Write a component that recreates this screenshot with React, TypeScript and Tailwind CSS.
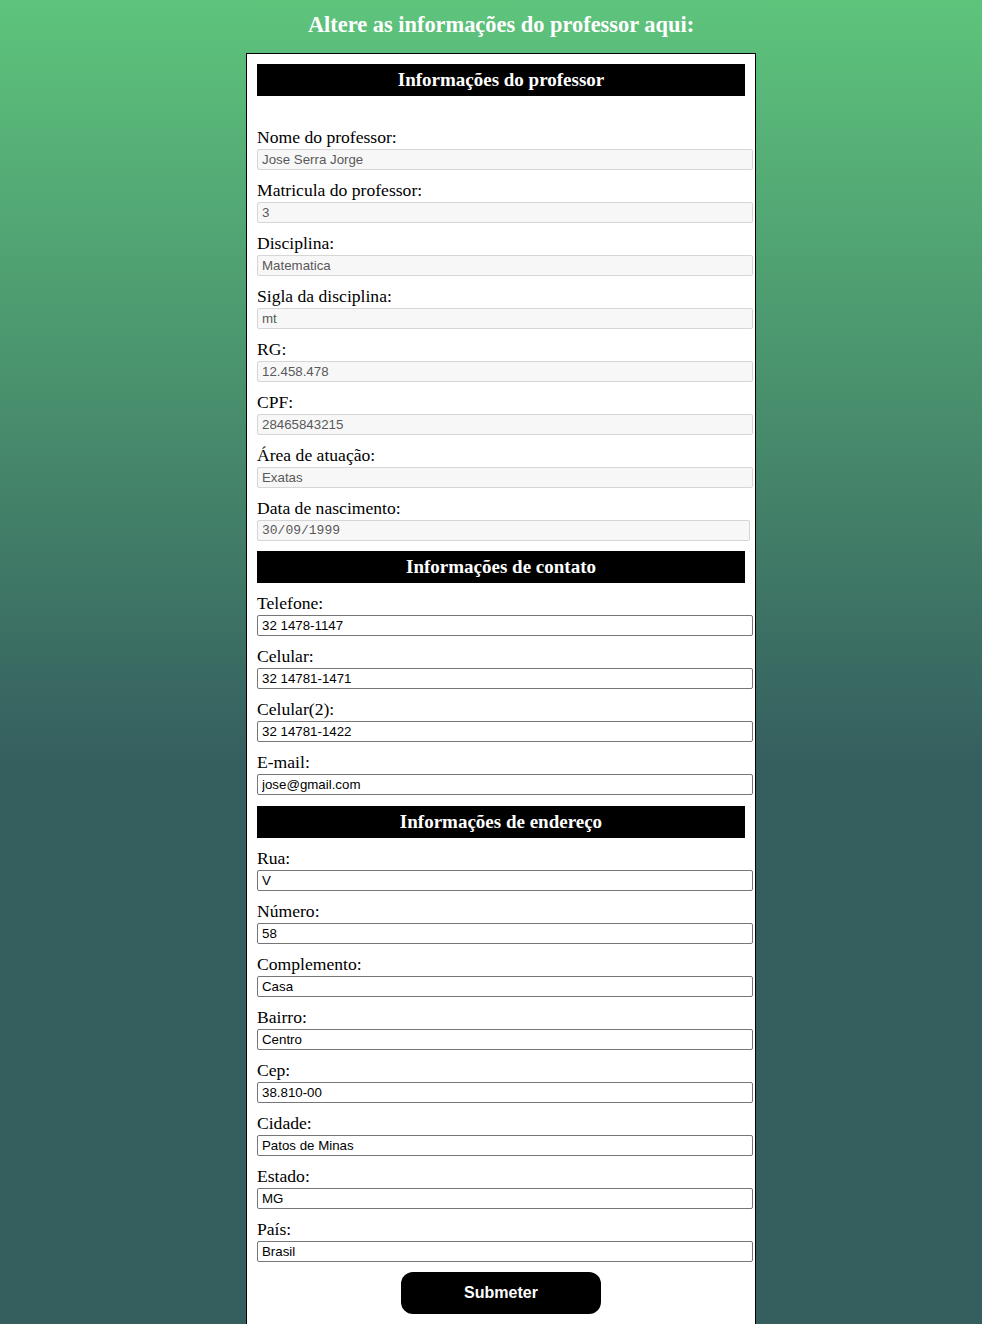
const PROFESSOR = [
  { label: "Nome do professor:", value: "Jose Serra Jorge" },
  { label: "Matricula do professor:", value: "3" },
  { label: "Disciplina:", value: "Matematica" },
  { label: "Sigla da disciplina:", value: "mt" },
  { label: "RG:", value: "12.458.478" },
  { label: "CPF:", value: "28465843215" },
  { label: "Área de atuação:", value: "Exatas" },
];

const CONTATO = [
  { label: "Telefone:", value: "32 1478-1147" },
  { label: "Celular:", value: "32 14781-1471" },
  { label: "Celular(2):", value: "32 14781-1422" },
  { label: "E-mail:", value: "jose@gmail.com" },
];

const ENDERECO = [
  { label: "Rua:", value: "V" },
  { label: "Número:", value: "58" },
  { label: "Complemento:", value: "Casa" },
  { label: "Bairro:", value: "Centro" },
  { label: "Cep:", value: "38.810-00" },
  { label: "Cidade:", value: "Patos de Minas" },
  { label: "Estado:", value: "MG" },
  { label: "País:", value: "Brasil" },
];

function SectionTitle({ children }: { children: React.ReactNode }) {
  return (
    <h2 className="w-[488px] h-[32px] bg-black text-white text-center font-bold text-[19px] leading-[32px] font-['Liberation_Serif',serif]">
      {children}
    </h2>
  );
}

function Field({ label, value, disabled }: { label: string; value: string; disabled?: boolean }) {
  return (
    <div className="flex flex-col mb-[10px]">
      <label className="text-[17.6px] leading-[21px] text-black font-['Liberation_Serif',serif]">{label}</label>
      <input
        defaultValue={value}
        disabled={disabled}
        className={
          disabled
            ? "mt-[1px] w-[496px] h-[21px] px-[4px] border border-[#d6d6d6] bg-[#f7f7f7] text-[#595959] text-[13.3px] font-['Liberation_Sans',sans-serif] rounded-[2px]"
            : "mt-[1px] w-[496px] h-[21px] px-[4px] border border-[#767676] bg-white text-black text-[13.3px] font-['Liberation_Sans',sans-serif] rounded-[2px]"
        }
      />
    </div>
  );
}

export default function App() {
  return (
    <div className="min-h-screen bg-[linear-gradient(180deg,#5ec47c_0px,#355f5f_760px)] bg-[#355f5f] flex flex-col items-center pl-[20px]">
      <h1 className="mt-[10px] h-[30px] text-white font-bold text-[22.4px] leading-[30px] font-['Liberation_Serif',serif]">
        Altere as informações do professor aqui:
      </h1>
      <form className="mt-[13px] w-[510px] bg-white border border-black px-[10px] pt-[10px] pb-[30px] flex flex-col">
        <SectionTitle>Informações do professor</SectionTitle>
        <div className="mt-[31px]">
          {PROFESSOR.map((f) => (
            <Field key={f.label} label={f.label} value={f.value} disabled />
          ))}
          <div className="flex flex-col mb-[10px]">
            <label className="text-[17.6px] leading-[21px] text-black font-['Liberation_Serif',serif]">
              Data de nascimento:
            </label>
            <div className="mt-[1px] w-[493px] h-[21px] px-[4px] border border-[#d6d6d6] bg-[#f7f7f7] text-[#595959] text-[13px] leading-[20px] font-['Liberation_Mono',monospace] rounded-[2px]">
              30/09/1999
            </div>
          </div>
        </div>
        <SectionTitle>Informações de contato</SectionTitle>
        <div className="mt-[10px]">
          {CONTATO.map((f) => (
            <Field key={f.label} label={f.label} value={f.value} />
          ))}
        </div>
        <div className="mt-[1px]">
          <SectionTitle>Informações de endereço</SectionTitle>
        </div>
        <div className="mt-[10px]">
          {ENDERECO.map((f) => (
            <Field key={f.label} label={f.label} value={f.value} />
          ))}
        </div>
        <button
          type="button"
          className="self-center w-[200px] h-[42px] rounded-[12px] bg-black text-white font-bold text-[16px] font-['Liberation_Sans',sans-serif]"
        >
          Submeter
        </button>
      </form>
    </div>
  );
}
